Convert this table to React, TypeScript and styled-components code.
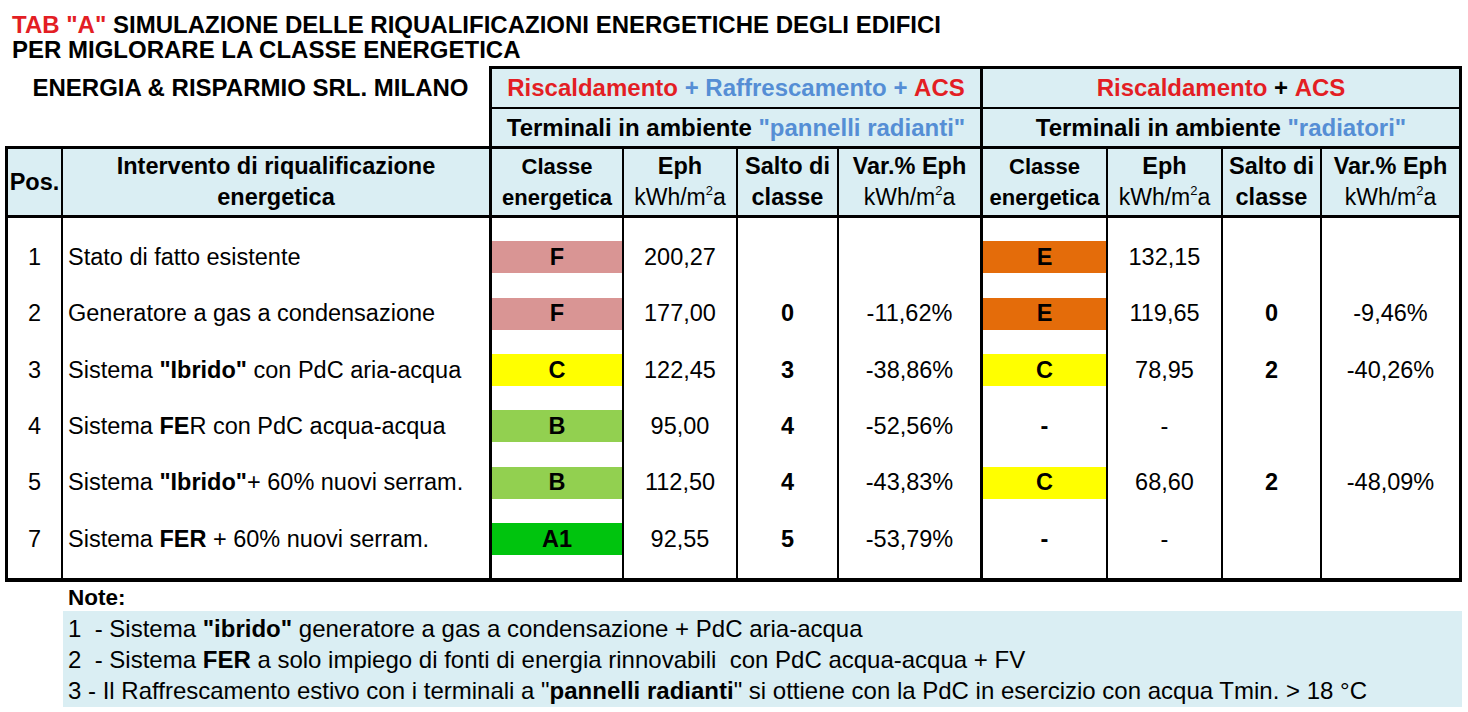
import * as React from 'react';
import styled, { createGlobalStyle } from 'styled-components';

const RED = '#e31e24';
const BLUE = '#558ed5';
const HEAD_BG = '#daeef3';

// column widths (each includes its own right border)
const COLS = [55, 429, 132, 114, 101, 144, 125, 115, 99, 137];
const RIGHT = [2, 3, 2, 2, 2, 3, 2, 2, 2, 0];

const CLASS_COLORS: Record<string, string> = {
    F: '#d99594',
    E: '#e46c0a',
    C: '#ffff00',
    B: '#92d050',
    A1: '#00c40e',
};

const GlobalStyle = createGlobalStyle`
    html, body {
        margin: 0;
        padding: 0;
        background: #ffffff;
    }
    body {
        font-family: "Liberation Sans", Arial, sans-serif;
        color: #000000;
    }
    * {
        box-sizing: border-box;
    }
`

const Page = styled.div`
    width: 1468px;
    height: 712px;
    overflow: hidden;
`

const Title = styled.h1`
    margin: 0 0 4px;
    padding: 12px 0 0 12px;
    font-size: 24px;
    line-height: 25px;
    font-weight: bold;
`

const Red = styled.span`
    color: ${RED};
`

const Blue = styled.span`
    color: ${BLUE};
`

const Sheet = styled.div`
    margin-left: 5px;
    width: 1457px;
`

const TopHeader = styled.div`
    display: flex;
    align-items: flex-start;
`

const CompanyName = styled.div`
    width: 484px;
    padding: 3px 0 0 7px;
    line-height: 38px;
    text-align: center;
    font-size: 24px;
    font-weight: bold;
`

const HeadBox = styled.div`
    display: flex;
    width: 973px;
    border: 3px solid #000;
    border-bottom: none;
`

const HeadGroup = styled.div<{ $w: number; $right: number }>`
    display: flex;
    flex-direction: column;
    width: ${p => p.$w}px;
    border-right: ${p => p.$right}px solid #000;
`

const HeadLine = styled.div<{ $h: number; $bottom: number }>`
    display: flex;
    align-items: center;
    justify-content: center;
    height: ${p => p.$h}px;
    border-bottom: ${p => p.$bottom}px solid #000;
    background: ${HEAD_BG};
    font-size: 24px;
    font-weight: bold;
    white-space: pre;
`

const Table = styled.div`
    width: 1457px;
    border: 3px solid #000;
    border-bottom-width: 4px;
`

const Row = styled.div<{ $h: number; $bg?: string; $bottom?: number }>`
    display: grid;
    grid-template-columns: ${COLS.map(c => `${c}px`).join(' ')};
    height: ${p => p.$h}px;
    background: ${p => p.$bg || '#ffffff'};
    border-bottom: ${p => p.$bottom || 0}px solid #000;
`

const Cell = styled.div<{ $right: number; $align?: 'left' | 'center' }>`
    display: flex;
    align-items: center;
    justify-content: ${p => (p.$align === 'left' ? 'flex-start' : 'center')};
    padding-left: ${p => (p.$align === 'left' ? 5 : 0)}px;
    border-right: ${p => p.$right}px solid #000;
    font-size: 23.5px;
    white-space: pre;
    min-width: 0;
`

const HeadText = styled.div<{ $size?: number }>`
    text-align: center;
    font-size: ${p => p.$size || 23.5}px;
    line-height: 31px;
    font-weight: bold;
`

const Unit = styled.span`
    font-weight: normal;
    font-size: 23px;
`

const Sup = styled.sup`
    font-size: 13px;
    line-height: 0;
    vertical-align: 10px;
`

const ClassBar = styled.div<{ $color: string }>`
    display: flex;
    align-items: center;
    justify-content: center;
    width: 100%;
    height: 32px;
    background: ${p => p.$color};
    font-weight: bold;
`

const Bold = styled.b`
    font-weight: bold;
`

const NotesArea = styled.div`
    margin: 5px 0 0 58px;
    width: 1399px;
`

const NoteTitle = styled.div`
    height: 24px;
    padding-left: 5px;
    font-size: 22.5px;
    line-height: 22px;
    font-weight: bold;
`

const NoteBox = styled.div`
    display: flex;
    flex-direction: column;
    padding: 2px 0 1px 5px;
    background: ${HEAD_BG};
`

const NoteLine = styled.div`
    font-size: 24px;
    line-height: 31px;
    white-space: pre;
`

type Side = { cls: string; eph: string; salto: string; varp: string };
type Item = { pos: string; label: React.ReactNode; a: Side; b: Side };

const ITEMS: Item[] = [
    {
        pos: '1',
        label: 'Stato di fatto esistente',
        a: { cls: 'F', eph: '200,27', salto: '', varp: '' },
        b: { cls: 'E', eph: '132,15', salto: '', varp: '' },
    },
    {
        pos: '2',
        label: 'Generatore a gas a condensazione',
        a: { cls: 'F', eph: '177,00', salto: '0', varp: '-11,62%' },
        b: { cls: 'E', eph: '119,65', salto: '0', varp: '-9,46%' },
    },
    {
        pos: '3',
        label: <>Sistema <Bold>"Ibrido"</Bold> con PdC aria-acqua</>,
        a: { cls: 'C', eph: '122,45', salto: '3', varp: '-38,86%' },
        b: { cls: 'C', eph: '78,95', salto: '2', varp: '-40,26%' },
    },
    {
        pos: '4',
        label: <>Sistema <Bold>FE</Bold>R con PdC acqua-acqua</>,
        a: { cls: 'B', eph: '95,00', salto: '4', varp: '-52,56%' },
        b: { cls: '-', eph: '-', salto: '', varp: '' },
    },
    {
        pos: '5',
        label: <>Sistema <Bold>"Ibrido"</Bold>+ 60% nuovi serram.</>,
        a: { cls: 'B', eph: '112,50', salto: '4', varp: '-43,83%' },
        b: { cls: 'C', eph: '68,60', salto: '2', varp: '-48,09%' },
    },
    {
        pos: '7',
        label: <>Sistema <Bold>FER</Bold> + 60% nuovi serram.</>,
        a: { cls: 'A1', eph: '92,55', salto: '5', varp: '-53,79%' },
        b: { cls: '-', eph: '-', salto: '', varp: '' },
    },
];

const ROW_HEIGHTS = [56, 57, 56, 56, 57, 56];

const UnitLabel = () => (
    <Unit>kWh/m<Sup>2</Sup>a</Unit>
);

const sideHead = (): React.ReactNode[] => [
    <HeadText $size={22}>Classe<br />energetica</HeadText>,
    <HeadText>Eph<br /><UnitLabel /></HeadText>,
    <HeadText>Salto di<br />classe</HeadText>,
    <HeadText>Var.% Eph<br /><UnitLabel /></HeadText>,
];

const sideCells = (s: Side): React.ReactNode[] => [
    s.cls in CLASS_COLORS
        ? <ClassBar $color={CLASS_COLORS[s.cls]}>{s.cls}</ClassBar>
        : <Bold>{s.cls}</Bold>,
    s.eph,
    <Bold>{s.salto}</Bold>,
    s.varp,
];

const SpacerRow = ({ h }: { h: number }) => (
    <Row $h={h}>
        {RIGHT.map((r, i) => <Cell key={i} $right={r} />)}
    </Row>
);

export default function App() {
    const headCells: React.ReactNode[] = [
        <HeadText>Pos.</HeadText>,
        <HeadText>Intervento di riqualificazione<br />energetica</HeadText>,
        ...sideHead(),
        ...sideHead(),
    ];
    return (
        <Page>
            <GlobalStyle />
            <Title>
                <Red>TAB "A"</Red> SIMULAZIONE DELLE RIQUALIFICAZIONI ENERGETICHE DEGLI EDIFICI<br />
                PER MIGLORARE LA CLASSE ENERGETICA
            </Title>
            <Sheet>
                <TopHeader>
                    <CompanyName>ENERGIA &amp; RISPARMIO SRL. MILANO</CompanyName>
                    <HeadBox>
                        <HeadGroup $w={491} $right={3}>
                            <HeadLine $h={40} $bottom={2}>
                                <Red>Riscaldamento</Red><Blue> + Raffrescamento + </Blue><Red>ACS</Red>
                            </HeadLine>
                            <HeadLine $h={37} $bottom={0}>
                                Terminali in ambiente <Blue>"pannelli radianti"</Blue>
                            </HeadLine>
                        </HeadGroup>
                        <HeadGroup $w={476} $right={0}>
                            <HeadLine $h={40} $bottom={2}>
                                <Red>Riscaldamento</Red> + <Red>ACS</Red>
                            </HeadLine>
                            <HeadLine $h={37} $bottom={0}>
                                Terminali in ambiente <Blue>"radiatori"</Blue>
                            </HeadLine>
                        </HeadGroup>
                    </HeadBox>
                </TopHeader>
                <Table>
                    <Row $h={69} $bg={HEAD_BG} $bottom={3}>
                        {headCells.map((c, i) => (
                            <Cell key={i} $right={RIGHT[i]}>{c}</Cell>
                        ))}
                    </Row>
                    <SpacerRow h={11} />
                    {ITEMS.map((it, r) => {
                        const cells: React.ReactNode[] = [
                            it.pos,
                            it.label,
                            ...sideCells(it.a),
                            ...sideCells(it.b),
                        ];
                        return (
                            <Row key={r} $h={ROW_HEIGHTS[r]}>
                                {cells.map((c, i) => (
                                    <Cell
                                        key={i}
                                        $right={RIGHT[i]}
                                        $align={i === 1 ? 'left' : 'center'}
                                    >
                                        {c}
                                    </Cell>
                                ))}
                            </Row>
                        );
                    })}
                    <SpacerRow h={11} />
                </Table>
                <NotesArea>
                    <NoteTitle>Note:</NoteTitle>
                    <NoteBox>
                        <NoteLine>1  - Sistema <Bold>"ibrido"</Bold> generatore a gas a condensazione + PdC aria-acqua</NoteLine>
                        <NoteLine>2  - Sistema <Bold>FER</Bold> a solo impiego di fonti di energia rinnovabili  con PdC acqua-acqua + FV</NoteLine>
                        <NoteLine>3 - Il Raffrescamento estivo con i terminali a "<Bold>pannelli radianti</Bold>" si ottiene con la PdC in esercizio con acqua Tmin. &gt; 18 °C</NoteLine>
                    </NoteBox>
                </NotesArea>
            </Sheet>
        </Page>
    );
}
